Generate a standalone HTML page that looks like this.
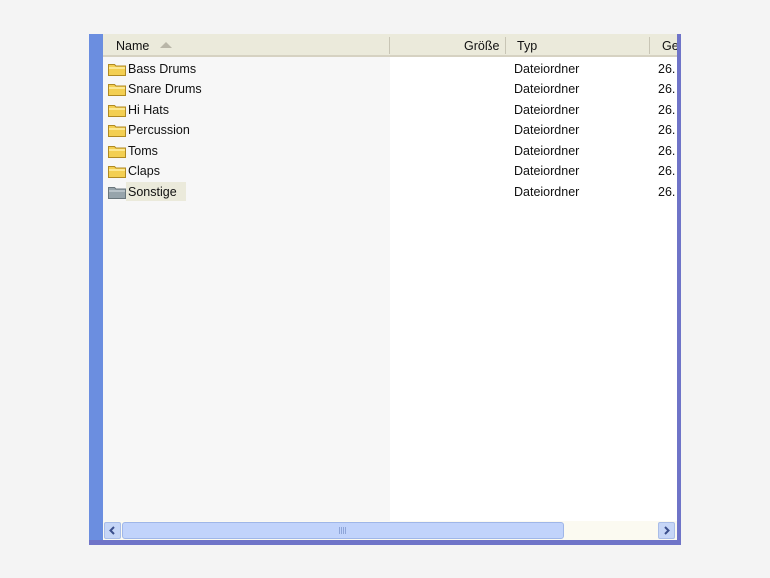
<!DOCTYPE html>
<html><head><meta charset="utf-8"><style>
body{margin:0;width:770px;height:578px;background:#f4f4f4;position:relative;overflow:hidden;font-family:"Liberation Sans","DejaVu Sans",sans-serif;font-size:12.5px;color:#111}
.a{position:absolute}
.row{position:absolute;left:107px;height:18px;line-height:18px}
.fold{position:absolute;left:0;top:1px;width:20px;height:16px}
.t{position:absolute;left:21px;white-space:nowrap}
.typ{position:absolute;left:514px;height:18px;line-height:18px}
.dt{position:absolute;left:658px;height:18px;line-height:18px}
</style></head><body>
<div class="a" style="left:89px;top:34px;width:14px;height:511px;background:#6b8ee0"></div>
<div class="a" style="left:103px;top:34px;width:574px;height:487px;background:#fff"></div>
<div class="a" style="left:103px;top:57px;width:287px;height:464px;background:#f7f7f7"></div>
<div class="a" style="left:103px;top:34px;width:574px;height:23px;background:#ebeadb;border-bottom:2px solid #d6d2c2;box-sizing:border-box"></div>
<div class="a" style="left:389px;top:37px;width:1px;height:17px;background:#c8c5b5"></div>
<div class="a" style="left:505px;top:37px;width:1px;height:17px;background:#c8c5b5"></div>
<div class="a" style="left:649px;top:37px;width:1px;height:17px;background:#c8c5b5"></div>
<div class="a" style="left:116px;top:38px;line-height:16px">Name</div>
<div class="a" style="left:160px;top:42px;width:0;height:0;border-left:6px solid transparent;border-right:6px solid transparent;border-bottom:6px solid #b9b6a8"></div>
<div class="a" style="left:464px;top:38px;line-height:16px">Größe</div>
<div class="a" style="left:517px;top:38px;line-height:16px">Typ</div>
<div class="a" style="left:662px;top:38px;line-height:16px">Ge</div>
<div class="a" style="left:677px;top:34px;width:4px;height:511px;background:#6f74c8"></div>
<div class="a" style="left:89px;top:540px;width:592px;height:5px;background:#6f74c8"></div>

<div class="row" style="top:60px"><svg class="fold" viewBox="0 0 20 16"><path d="M1.5 3.5h6l1.5 1.5h9.5v9.5h-17z" fill="#f3cf52" stroke="#b08a22"/><path d="M2 7h16" stroke="#fff1a8" stroke-width="1.5"/></svg><span class="t">Bass Drums</span></div>
<div class="row" style="top:80px"><svg class="fold" viewBox="0 0 20 16"><path d="M1.5 3.5h6l1.5 1.5h9.5v9.5h-17z" fill="#f3cf52" stroke="#b08a22"/><path d="M2 7h16" stroke="#fff1a8" stroke-width="1.5"/></svg><span class="t">Snare Drums</span></div>
<div class="row" style="top:101px"><svg class="fold" viewBox="0 0 20 16"><path d="M1.5 3.5h6l1.5 1.5h9.5v9.5h-17z" fill="#f3cf52" stroke="#b08a22"/><path d="M2 7h16" stroke="#fff1a8" stroke-width="1.5"/></svg><span class="t">Hi Hats</span></div>
<div class="row" style="top:121px"><svg class="fold" viewBox="0 0 20 16"><path d="M1.5 3.5h6l1.5 1.5h9.5v9.5h-17z" fill="#f3cf52" stroke="#b08a22"/><path d="M2 7h16" stroke="#fff1a8" stroke-width="1.5"/></svg><span class="t">Percussion</span></div>
<div class="row" style="top:142px"><svg class="fold" viewBox="0 0 20 16"><path d="M1.5 3.5h6l1.5 1.5h9.5v9.5h-17z" fill="#f3cf52" stroke="#b08a22"/><path d="M2 7h16" stroke="#fff1a8" stroke-width="1.5"/></svg><span class="t">Toms</span></div>
<div class="row" style="top:162px"><svg class="fold" viewBox="0 0 20 16"><path d="M1.5 3.5h6l1.5 1.5h9.5v9.5h-17z" fill="#f3cf52" stroke="#b08a22"/><path d="M2 7h16" stroke="#fff1a8" stroke-width="1.5"/></svg><span class="t">Claps</span></div>
<div class="a" style="left:126px;top:182px;width:60px;height:19px;background:#ebeadb"></div>
<div class="row" style="top:183px"><svg class="fold" viewBox="0 0 20 16"><path d="M1.5 3.5h6l1.5 1.5h9.5v9.5h-17z" fill="#97a4ab" stroke="#6a767c"/><path d="M2 7h16" stroke="#c3ccd1" stroke-width="1.5"/></svg><span class="t">Sonstige</span></div>

<div class="typ" style="top:60px">Dateiordner</div><div class="dt" style="top:60px">26.</div>
<div class="typ" style="top:80px">Dateiordner</div><div class="dt" style="top:80px">26.</div>
<div class="typ" style="top:101px">Dateiordner</div><div class="dt" style="top:101px">26.</div>
<div class="typ" style="top:121px">Dateiordner</div><div class="dt" style="top:121px">26.</div>
<div class="typ" style="top:142px">Dateiordner</div><div class="dt" style="top:142px">26.</div>
<div class="typ" style="top:162px">Dateiordner</div><div class="dt" style="top:162px">26.</div>
<div class="typ" style="top:183px">Dateiordner</div><div class="dt" style="top:183px">26.</div>

<div class="a" style="left:103px;top:521px;width:574px;height:19px;background:#fbfaf1"></div>
<div class="a" style="left:104px;top:522px;width:17px;height:17px;background:#c6d6f7;border:1px solid #a9bde8;box-sizing:border-box;border-radius:2px"></div>
<svg class="a" style="left:104px;top:522px" width="17" height="17"><path d="M10 5l-3.5 3.5L10 12" fill="none" stroke="#3b4f8c" stroke-width="2"/></svg>
<div class="a" style="left:122px;top:522px;width:442px;height:17px;background:#c1d3fb;border:1px solid #9fb6e8;box-sizing:border-box;border-radius:3px"></div>
<div class="a" style="left:339px;top:527px;width:8px;height:7px;background:repeating-linear-gradient(90deg,#8ea5d8 0 1px,transparent 1px 2px)"></div>
<div class="a" style="left:658px;top:522px;width:17px;height:17px;background:#c6d6f7;border:1px solid #a9bde8;box-sizing:border-box;border-radius:2px"></div>
<svg class="a" style="left:658px;top:522px" width="17" height="17"><path d="M7 5l3.5 3.5L7 12" fill="none" stroke="#3b4f8c" stroke-width="2"/></svg>
</body></html>
